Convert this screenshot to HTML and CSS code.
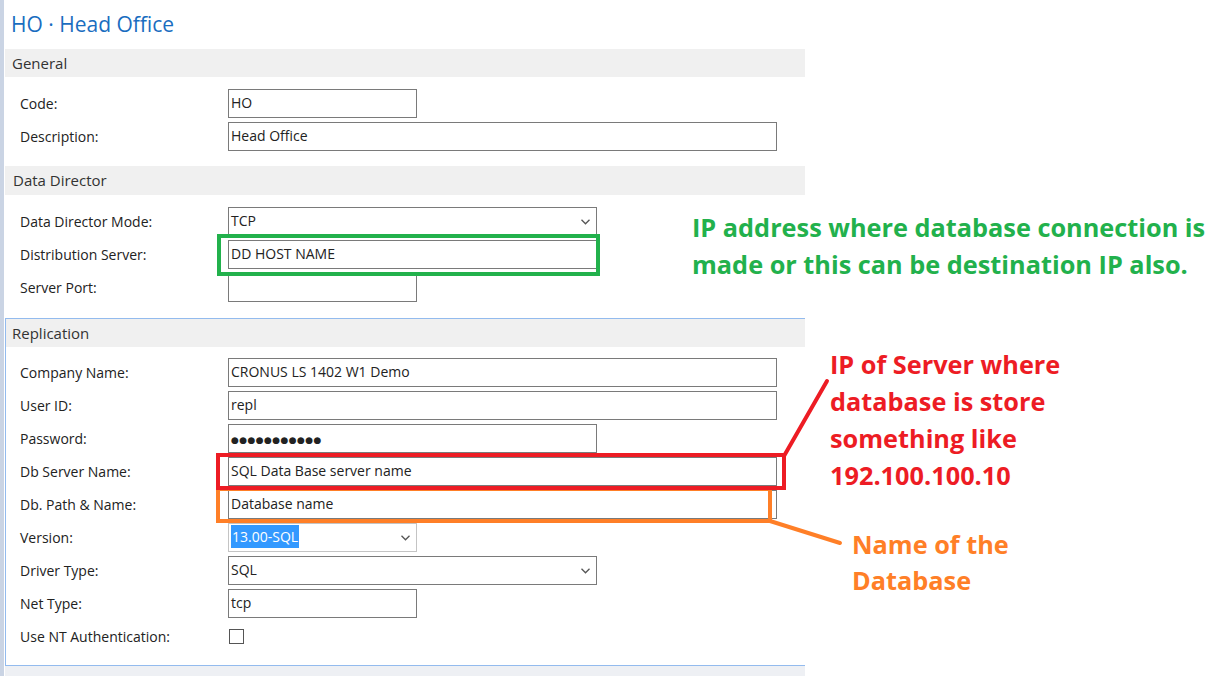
FILE: index.html
```html
<!DOCTYPE html>
<html lang="en">
<head>
    <meta charset="UTF-8">
    <meta name="viewport" content="width=device-width, initial-scale=1.0">
    <title>HO · Head Office</title>
    <link rel="stylesheet" href="styles.css">
</head>
<body>
<div class="screen">

    <div class="form">
        <h1 class="title">HO · Head Office</h1>

        <!-- General -->
        <section class="group group-general">
            <div class="group-head">General</div>
            <div class="group-body">
                <div class="row"><span class="label">Code:</span><div class="box w-short">HO</div></div>
                <div class="row"><span class="label">Description:</span><div class="box w-long">Head Office</div></div>
            </div>
        </section>

        <!-- Data Director -->
        <section class="group group-dd">
            <div class="group-head">Data Director</div>
            <div class="group-body">
                <div class="row">
                    <span class="label">Data Director Mode:</span>
                    <div class="box w-mid select">TCP
                        <svg class="chev" width="9" height="6" viewBox="0 0 9 6"><polyline points="0.5,0.8 4.5,4.8 8.5,0.8" fill="none" stroke="#555" stroke-width="1.3"/></svg>
                    </div>
                </div>
                <div class="row"><span class="label">Distribution Server:</span><div class="box w-mid">DD HOST NAME</div></div>
                <div class="row"><span class="label">Server Port:</span><div class="box w-short"></div></div>
            </div>
        </section>

        <!-- Replication (focused group) -->
        <section class="group group-repl">
            <div class="group-head">Replication</div>
            <div class="group-body">
                <div class="row"><span class="label">Company Name:</span><div class="box w-long">CRONUS LS 1402 W1 Demo</div></div>
                <div class="row"><span class="label">User ID:</span><div class="box w-long">repl</div></div>
                <div class="row"><span class="label">Password:</span><div class="box w-mid"><span class="dots">●●●●●●●●●●●</span></div></div>
                <div class="row"><span class="label">Db Server Name:</span><div class="box w-long">SQL Data Base server name</div></div>
                <div class="row"><span class="label">Db. Path &amp; Name:</span><div class="box w-long">Database name</div></div>
                <div class="row">
                    <span class="label">Version:</span>
                    <div class="box w-short select light"><span class="picked">13.00-SQL</span>
                        <svg class="chev" width="9" height="6" viewBox="0 0 9 6"><polyline points="0.5,0.8 4.5,4.8 8.5,0.8" fill="none" stroke="#555" stroke-width="1.3"/></svg>
                    </div>
                </div>
                <div class="row">
                    <span class="label">Driver Type:</span>
                    <div class="box w-mid select">SQL
                        <svg class="chev" width="9" height="6" viewBox="0 0 9 6"><polyline points="0.5,0.8 4.5,4.8 8.5,0.8" fill="none" stroke="#555" stroke-width="1.3"/></svg>
                    </div>
                </div>
                <div class="row"><span class="label">Net Type:</span><div class="box w-short">tcp</div></div>
                <div class="row"><span class="label">Use NT Authentication:</span><div class="check"></div></div>
            </div>
        </section>
        <div class="group-foot"></div>
    </div>

    <!-- hand drawn markup on top of the screenshot -->
    <svg class="marks" width="1218" height="676" viewBox="0 0 1218 676">
        <rect x="219" y="236" width="379" height="38" fill="none" stroke="#22b14c" stroke-width="4"/>
        <rect x="218" y="489" width="552" height="32" fill="none" stroke="#ff7f27" stroke-width="4"/>
        <line x1="770" y1="521" x2="840" y2="543" stroke="#ff7f27" stroke-width="4" stroke-linecap="round"/>
        <rect x="218" y="455" width="566" height="33" fill="none" stroke="#ed1c24" stroke-width="4"/>
        <line x1="784" y1="456" x2="827" y2="381" stroke="#ed1c24" stroke-width="4" stroke-linecap="round"/>
    </svg>

    <div class="note note-green">IP address where database connection is<br>made or this can be destination IP also.</div>
    <div class="note note-red">IP of Server where<br>database is store<br>something like<br>192.100.100.10</div>
    <div class="note note-orange">Name of the<br>Database</div>

</div>
</body>
</html>
```

FILE: styles.css
```css
body {
    margin: 0;
    background: #fff;
    font-family: 'Open Sans', 'Noto Sans', sans-serif;
    color: #222;
}

.screen {
    position: relative;
    width: 1218px;
    height: 676px;
    overflow: hidden;
}

.form {
    height: 676px;
    box-sizing: border-box;
    border-left: 4px solid #cad4e4;
    padding-left: 1px;
}

.title {
    margin: 0;
    height: 49px;
    box-sizing: border-box;
    padding: 8px 0 0 6px;
    font-size: 21px;
    font-weight: 400;
    line-height: 32px;
    color: #1a6dc0;
}

/* Groups */
.group {
    width: 800px;
    box-sizing: border-box;
}

.group-head {
    height: 28px;
    padding-left: 7px;
    background: #f0f0f0;
    font-size: 15px;
    line-height: 28px;
    color: #333;
}

.group-body {
    display: flex;
    flex-direction: column;
    gap: 4px;
    padding: 12px 0 15px 15px;
}

.group-dd .group-head { height: 29px; line-height: 29px; padding-left: 8px; }
.group-dd .group-body { padding-bottom: 16px; }

.group-repl {
    border: 1px solid #93bbee;
    border-right: none;
}

.group-repl .group-head { padding-left: 6px; }
.group-repl .group-body { padding: 11px 0 14px 14px; }

.group-foot {
    width: 800px;
    height: 11px;
    background: #eef0f4;
}

/* Rows */
.row {
    display: flex;
    align-items: center;
    height: 29px;
}

.label {
    width: 208px;
    flex: none;
    font-size: 14px;
    margin-top: -1px;
}

.box {
    position: relative;
    height: 29px;
    box-sizing: border-box;
    border: 1px solid #7a7a7a;
    padding-left: 2px;
    font-size: 14px;
    line-height: 26px;
    white-space: nowrap;
}

.w-short { width: 189px; }
.w-mid { width: 369px; }
.w-long { width: 549px; }

.select .chev {
    position: absolute;
    right: 6px;
    top: 11px;
}

.light { border-color: #c4c4c4; }

.picked {
    background: #3399ff;
    color: #fff;
    padding: 2px 1px;
}

.dots {
    font-family: 'DejaVu Sans', sans-serif;
    font-size: 9px;
    letter-spacing: 0.4px;
    color: #222;
}

.check {
    width: 15px;
    height: 15px;
    margin-left: 1px;
    box-sizing: border-box;
    border: 1px solid #555;
    background: #fff;
}

/* Annotations */
.marks {
    position: absolute;
    top: 0;
    left: 0;
    pointer-events: none;
}

.note {
    position: absolute;
    font-family: 'Open Sans', sans-serif;
    font-weight: 700;
    font-size: 25.3px;
    line-height: 37px;
    white-space: nowrap;
}

.note-green { left: 692px; top: 209px; color: #22b14c; }
.note-red { left: 830px; top: 346px; color: #ed1c24; }
.note-orange { left: 852px; top: 526px; line-height: 36px; color: #ff7f27; }
```
